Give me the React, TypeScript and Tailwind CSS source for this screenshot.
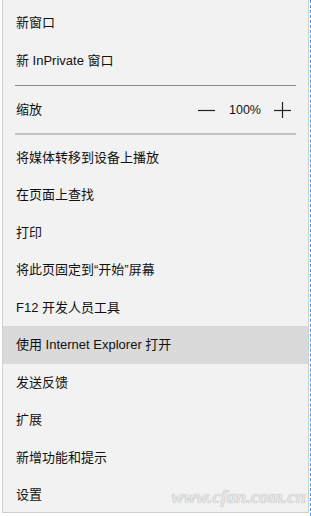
const items = [
  "将媒体转移到设备上播放",
  "在页面上查找",
  "打印",
  "将此页固定到“开始”屏幕",
  "F12 开发人员工具",
  "使用 Internet Explorer 打开",
  "发送反馈",
  "扩展",
  "新增功能和提示",
  "设置",
];

const FONT = "font-['Liberation_Sans','Noto_Sans_CJK_SC',sans-serif]";

function Row({ label, active }: { label: string; active?: boolean }) {
  return (
    <div
      className={`h-[37.5px] flex items-center pl-[13px] shrink-0 ${
        active ? "bg-[#dadada]" : ""
      }`}
    >
      <span className="text-[13px] leading-none text-[#111]">{label}</span>
    </div>
  );
}

export default function App() {
  return (
    <div className={`w-[311px] h-[516px] bg-white flex ${FONT} overflow-hidden`}>
      <div className="w-[2px] shrink-0" />
      {/* Menu panel */}
      <div className="relative w-[307px] h-[513px] bg-[#f2f2f2] border-l border-r border-b border-[#cfcfcf] flex flex-col pt-[4px] overflow-hidden">
        <Row label="新窗口" />
        <Row label="新 InPrivate 窗口" />

        <div className="h-[12px] flex items-center px-[12px] shrink-0">
          <div className="h-px w-full bg-[#8c8c8c]" />
        </div>

        <div className="h-[37.5px] flex items-center pl-[13px] pr-[17px] shrink-0">
          <span className="text-[13px] leading-none text-[#111]">缩放</span>
          <div className="ml-auto flex items-center">
            <svg width="17" height="16" viewBox="0 0 17 16">
              <line x1="0" y1="8.5" x2="17" y2="8.5" stroke="#222" strokeWidth="1.2" />
            </svg>
            <span className="ml-[14px] text-[12.5px] leading-none text-[#111]">100%</span>
            <svg className="ml-[13px]" width="17" height="16" viewBox="0 0 17 16">
              <line x1="0" y1="8.5" x2="17" y2="8.5" stroke="#222" strokeWidth="1.2" />
              <line x1="8.5" y1="0" x2="8.5" y2="16" stroke="#222" strokeWidth="1.2" />
            </svg>
          </div>
        </div>

        <div className="h-[10px] flex items-center px-[12px] shrink-0">
          <div className="h-[2px] w-full bg-[#c2c2c2]" />
        </div>

        {items.map((label) => (
          <Row key={label} label={label} active={label.startsWith("使用")} />
        ))}

        {/* watermark */}
        <span className="absolute right-[2px] bottom-[6px] italic font-bold text-[18.5px] leading-none text-[#e6e6e6] [text-shadow:0_0_1px_#9a9a9a] font-['Liberation_Serif',serif]">
          www.cfan.com.cn
        </span>
      </div>
      {/* selection marker */}
      <div className="ml-px w-px h-full border-l border-dashed border-[#3399ff]" />
    </div>
  );
}
